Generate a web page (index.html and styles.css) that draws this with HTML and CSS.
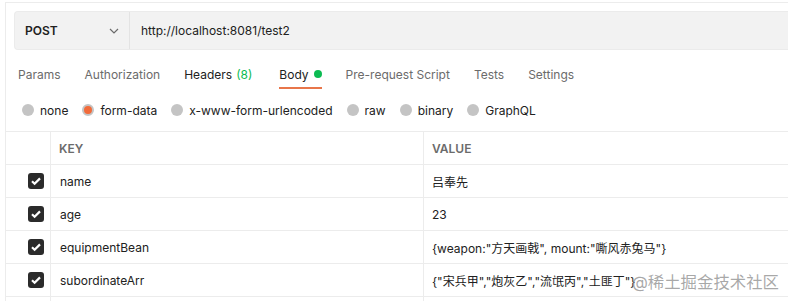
FILE: index.html
```html
<!DOCTYPE html>
<html lang="en">
<head>
    <meta charset="UTF-8">
    <meta name="viewport" content="width=device-width, initial-scale=1.0">
    <title>POST http://localhost:8081/test2</title>
    <link rel="stylesheet" href="styles.css">
</head>
<body>
    <div class="frame">
        <div class="request-bar">
            <div class="method">
                <span>POST</span>
                <svg class="chevron" width="10" height="6" viewBox="0 0 10 6"><path d="M1 1l4 4 4-4" fill="none" stroke="#6b6b6b" stroke-width="1.2"/></svg>
            </div>
            <div class="url">http://localhost:8081/test2</div>
        </div>

        <div class="tabs">
            <span class="tab">Params</span>
            <span class="tab">Authorization</span>
            <span class="tab dark">Headers <span class="count">(8)</span></span>
            <span class="tab dark active">Body <span class="dot"></span></span>
            <span class="tab">Pre-request Script</span>
            <span class="tab">Tests</span>
            <span class="tab">Settings</span>
        </div>

        <div class="body-types">
            <label class="radio"><span class="circle"></span>none</label>
            <label class="radio"><span class="circle on"></span>form-data</label>
            <label class="radio"><span class="circle"></span>x-www-form-urlencoded</label>
            <label class="radio"><span class="circle"></span>raw</label>
            <label class="radio"><span class="circle"></span>binary</label>
            <label class="radio"><span class="circle"></span>GraphQL</label>
        </div>

        <table class="params">
            <tr class="head">
                <th class="check-col"></th>
                <th class="key-col">KEY</th>
                <th>VALUE</th>
            </tr>
            <tr>
                <td class="check-col"><span class="box"></span></td>
                <td>name</td>
                <td>吕奉先</td>
            </tr>
            <tr>
                <td class="check-col"><span class="box"></span></td>
                <td>age</td>
                <td>23</td>
            </tr>
            <tr>
                <td class="check-col"><span class="box"></span></td>
                <td>equipmentBean</td>
                <td>{weapon:"方天画戟", mount:"嘶风赤兔马"}</td>
            </tr>
            <tr>
                <td class="check-col"><span class="box"></span></td>
                <td>subordinateArr</td>
                <td>{"宋兵甲","炮灰乙","流氓丙","土匪丁"}</td>
            </tr>
            <tr class="last">
                <td class="check-col"></td>
                <td></td>
                <td></td>
            </tr>
        </table>

        <div class="watermark">@稀土掘金技术社区</div>
    </div>
</body>
</html>
```

FILE: styles.css
```css
body {
    margin: 0;
    background: #fff;
    font-family: Inter, "Noto Sans CJK SC", sans-serif;
    font-size: 12px;
    color: #212121;
    overflow: hidden;
    height: 301px;
}
.frame {
    position: relative;
    margin: 2px 0 0 5px;
    height: 310px;
    border-top: 1px solid #ececec;
    border-left: 1px solid #ececec;
}
.request-bar {
    display: flex;
    height: 37px;
    margin: 8px 0 0 8px;
    background: #f2f2f2;
    border: 1px solid #ebebeb;
    border-right: none;
    border-radius: 4px 0 0 4px;
}
.method {
    display: flex;
    align-items: center;
    justify-content: space-between;
    width: 94px;
    padding: 0 10px 0 10px;
    border-right: 1px solid #e3e3e3;
    font-weight: 600;
    color: #212121;
}
.url {
    display: flex;
    align-items: center;
    padding-left: 11px;
    color: #212121;
}
.tabs {
    display: flex;
    gap: 24px;
    padding: 0 0 0 12px;
    margin-top: 10px;
    height: 29px;
    align-items: flex-start;
}
.tab {
    position: relative;
    display: flex;
    align-items: center;
    gap: 5px;
    height: 28px;
    color: #6b6b6b;
}
.tab.dark {
    color: #212121;
}
.tab .count {
    color: #0cbb52;
    margin-left: -1px;
    margin-right: 3px;
}
.tab.active::after {
    content: "";
    position: absolute;
    left: 0;
    right: 0;
    bottom: -1px;
    height: 2px;
    background: #e8764a;
}
.dot {
    width: 8px;
    height: 8px;
    border-radius: 50%;
    background: #0cbb52;
}
.body-types {
    display: flex;
    gap: 14px;
    padding-left: 16px;
    height: 42px;
    align-items: center;
}
.radio {
    display: flex;
    align-items: center;
    gap: 6px;
    color: #212121;
}
.circle {
    width: 12px;
    height: 12px;
    border-radius: 50%;
    background: #c4c4c4;
    box-sizing: border-box;
}
.circle.on {
    background: #f26b3a;
    border: 2px solid #c4c4c4;
}
.params {
    border-collapse: collapse;
    table-layout: fixed;
    width: 840px;
    border-top: 1px solid #ececec;
}
.params th,
.params td {
    height: 32px;
    padding: 0 8px;
    border-bottom: 1px solid #ececec;
    border-left: 1px solid #ececec;
    text-align: left;
    white-space: nowrap;
}
.params th {
    font-size: 12px;
    font-weight: 600;
    color: #6b6b6b;
}
.params .check-col {
    width: 22px;
    border-left: none;
    padding: 0 0 0 22px;
}
.params .key-col {
    width: 356px;
}
.params tr td:nth-child(2) {
    padding-left: 9px;
}
.box {
    display: block;
    width: 16px;
    height: 16px;
    border-radius: 3px;
    background: #2b2b2b url("data:image/svg+xml,%3Csvg xmlns='http://www.w3.org/2000/svg' viewBox='0 0 16 16'%3E%3Cpath d='M4 8.3l2.6 2.5L12 5.4' fill='none' stroke='white' stroke-width='2.2'/%3E%3C/svg%3E") center/16px no-repeat;
}
.watermark {
    position: absolute;
    left: 626px;
    top: 266px;
    font-size: 16.4px;
    white-space: nowrap;
    color: rgba(140, 140, 140, 0.75);
}
```
